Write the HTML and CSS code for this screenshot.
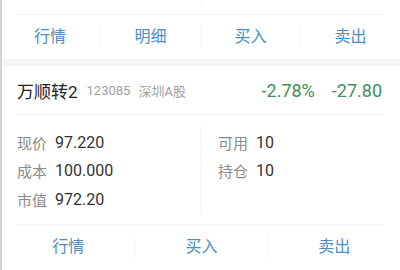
FILE: index.html
```html
<!DOCTYPE html>
<html lang="zh-CN">
<head>
  <meta charset="UTF-8">
  <title>持仓</title>
  <link rel="stylesheet" href="styles.css">
</head>
<body>
  <div class="page">
    <div class="card">
      <div class="tail">
        <div class="tail-col"></div>
        <div class="tail-col"></div>
      </div>
      <div class="actions four">
        <a class="action">行情</a>
        <a class="action">明细</a>
        <a class="action">买入</a>
        <a class="action">卖出</a>
      </div>
    </div>

    <div class="gap"></div>

    <div class="card">
      <div class="head">
        <span class="name">万顺转2</span>
        <span class="code">123085</span>
        <span class="market">深圳A股</span>
        <span class="pct">-2.78%</span>
        <span class="chg">-27.80</span>
      </div>
      <div class="info">
        <div class="info-col">
          <div class="row"><span class="label">现价</span><span class="value">97.220</span></div>
          <div class="row"><span class="label">成本</span><span class="value">100.000</span></div>
          <div class="row"><span class="label">市值</span><span class="value">972.20</span></div>
        </div>
        <div class="info-col right">
          <div class="row"><span class="label">可用</span><span class="value">10</span></div>
          <div class="row"><span class="label">持仓</span><span class="value">10</span></div>
        </div>
      </div>
      <div class="actions three">
        <a class="action">行情</a>
        <a class="action">买入</a>
        <a class="action">卖出</a>
      </div>
    </div>
  </div>
</body>
</html>
```

FILE: styles.css
```css
body {
    margin: 0;
    padding: 0;
    background: #ffffff;
    font-family: "Roboto", "Noto Sans CJK SC", sans-serif;
}
.page {
    width: 398px;
    height: 270px;
    border-left: 2px solid #d4d4d4;
    overflow: hidden;
}
.card {
    background: #ffffff;
}
.tail {
    display: grid;
    grid-template-columns: 1fr 1fr;
    height: 14px;
    border-bottom: 1px solid #f1f1f1;
    margin: 0 16px 0 14px;
}
.tail-col + .tail-col {
    border-left: 1px solid #f6f6f6;
    height: 4px;
}
.actions {
    display: grid;
    height: 44px;
    align-items: center;
}
.four {
    grid-template-columns: repeat(4, 1fr);
    margin-left: -2px;
}
.three {
    grid-template-columns: repeat(3, 1fr);
}
.action {
    text-align: center;
    font-size: 16px;
    color: #4b8fc2;
    line-height: 22px;
    border-left: 1px solid #f7f7f7;
}
.action:first-child {
    border-left: none;
}
.gap {
    height: 7px;
    background: #f4f4f4;
}
.head {
    display: flex;
    align-items: center;
    height: 47px;
    margin: 0 16px 0 14px;
    padding-top: 1px;
    border-bottom: 1px solid #f1f1f1;
}
.name {
    font-size: 17px;
    color: #222222;
    margin-left: 1px;
}
.code {
    font-size: 13px;
    color: #a0a0a0;
    margin-left: 9px;
}
.market {
    font-size: 13px;
    color: #a0a0a0;
    margin-left: 8px;
}
.pct {
    margin-left: auto;
    font-size: 18px;
    color: #3f8f58;
}
.chg {
    margin-left: 17px;
    margin-right: 2px;
    font-size: 18px;
    color: #3f8f58;
}
.info {
    display: grid;
    grid-template-columns: 184px 1fr;
    margin: 0 16px 0 14px;
    padding: 13px 0 11px;
    height: 85px;
    border-bottom: 1px solid #f1f1f1;
}
.info-col.right {
    border-left: 1px solid #f6f6f6;
    padding-left: 16px;
    margin-top: -3px;
    padding-top: 3px;
}
.row {
    display: flex;
    align-items: center;
    height: 28.5px;
}
.label {
    font-size: 15px;
    color: #8a8a8a;
    margin-left: 1px;
}
.value {
    font-size: 16px;
    color: #333333;
    margin-left: 8px;
}
```
